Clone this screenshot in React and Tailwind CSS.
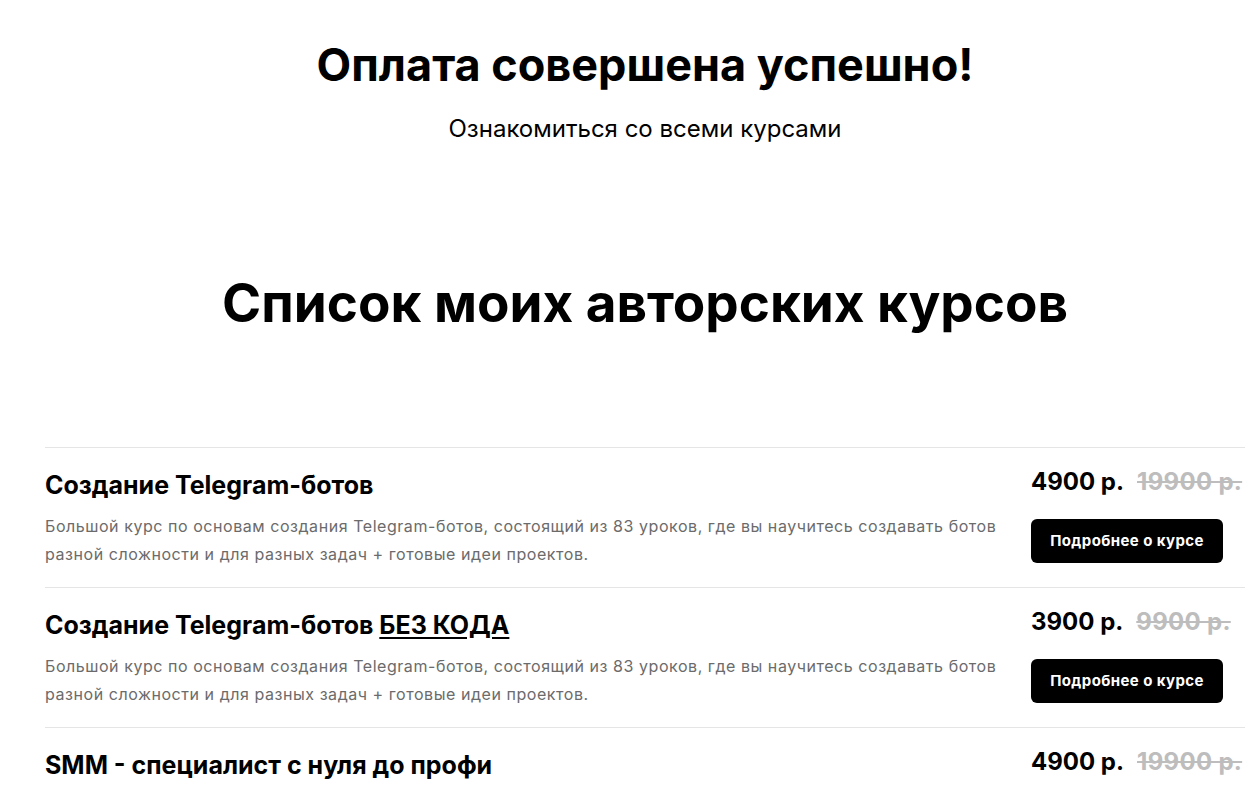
import React from 'react'

const courses = [
  {
    title: 'Создание Telegram-ботов',
    extra: null,
    price: '4900 р.',
    oldPrice: '19900 р.',
    text: 'Большой курс по основам создания Telegram-ботов, состоящий из 83 уроков, где вы научитесь создавать ботов разной сложности и для разных задач + готовые идеи проектов.'
  },
  {
    title: 'Создание Telegram-ботов',
    extra: 'БЕЗ КОДА',
    price: '3900 р.',
    oldPrice: '9900 р.',
    text: 'Большой курс по основам создания Telegram-ботов, состоящий из 83 уроков, где вы научитесь создавать ботов разной сложности и для разных задач + готовые идеи проектов.'
  },
  {
    title: 'SMM - специалист с нуля до профи',
    extra: null,
    price: '4900 р.',
    oldPrice: '19900 р.',
    text: 'Большой курс по основам создания Telegram-ботов, состоящий из 83 уроков, где вы научитесь создавать ботов разной сложности и для разных задач + готовые идеи проектов.'
  }
]

function CourseRow({ course }) {
  return (
    <div className="flex justify-between border-t border-[#e5e5e5] h-[140px]">
      <div className="w-[960px] pt-[21px]">
        <h3 className="text-[25px] leading-[32px] font-bold text-black">
          {course.title}
          {course.extra && (
            <>
              {' '}
              <span className="underline underline-offset-[3px]">{course.extra}</span>
            </>
          )}
        </h3>
        <p className="mt-[11px] text-[16px] leading-[28px] tracking-[0.55px] text-[#6b6b6b]">{course.text}</p>
      </div>
      <div className="w-[214px] shrink-0 pt-[18px]">
        <div className="flex items-baseline gap-[13px] text-[24px] leading-[32px] font-bold whitespace-nowrap">
          <span className="text-black">{course.price}</span>
          <span className="text-[#bdbdbd] line-through decoration-2 tracking-[0.3px]">{course.oldPrice}</span>
        </div>
        <button
          type="button"
          className="mt-[21px] h-[44px] w-[192px] rounded-[6px] bg-black text-[15px] font-bold tracking-[0.4px] text-white"
        >
          Подробнее о курсе
        </button>
      </div>
    </div>
  )
}

export default function App() {
  return (
    <div className="min-h-screen bg-white font-['Inter',sans-serif] text-black">
      <div className="ml-[45px] w-[1200px]">
        {/* Success block */}
        <div className="pt-[38px] text-center">
          <h1 className="text-[45px] leading-[54px] font-bold">Оплата совершена успешно!</h1>
          <a href="#" className="mt-[23px] inline-block text-[24px] leading-[28px] text-black">
            Ознакомиться со всеми курсами
          </a>
        </div>

        {/* Courses */}
        <h2 className="mt-[128px] text-center text-[53px] leading-[64px] font-bold">
          Список моих авторских курсов
        </h2>

        <div className="mt-[112px]">
          {courses.map((c, i) => (
            <CourseRow key={i} course={c} />
          ))}
        </div>
      </div>
    </div>
  )
}
